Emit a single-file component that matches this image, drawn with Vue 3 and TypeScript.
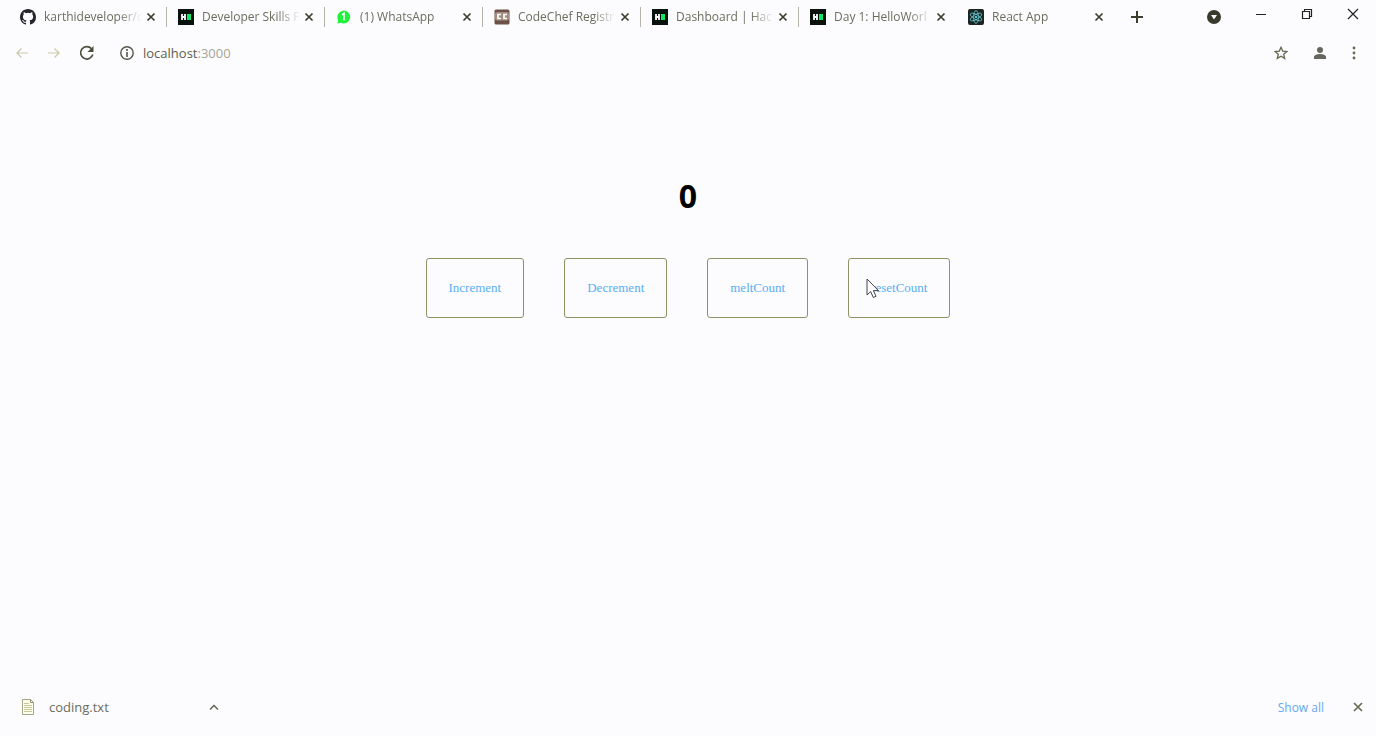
<script setup lang="ts">
import { ref } from 'vue'

type TabIcon = 'github' | 'hacker' | 'whatsapp' | 'chef' | 'react'
interface Tab {
  title: string
  icon: TabIcon
}

const tabs = ref<Tab[]>([
  { title: 'karthideveloper/c', icon: 'github' },
  { title: 'Developer Skills P', icon: 'hacker' },
  { title: '(1) WhatsApp', icon: 'whatsapp' },
  { title: 'CodeChef Registr', icon: 'chef' },
  { title: 'Dashboard | Hac', icon: 'hacker' },
  { title: 'Day 1: HelloWorl', icon: 'hacker' },
  { title: 'React App', icon: 'react' },
])

const count = ref(0)
const actions = [
  { label: 'Increment', run: () => count.value++ },
  { label: 'Decrement', run: () => count.value-- },
  { label: 'meltCount', run: () => (count.value *= 2) },
  { label: 'resetCount', run: () => (count.value = 0) },
]
</script>

<template>
  <div class="browser">
    <header class="tab-strip">
      <nav class="tabs" aria-label="Tabs">
        <div v-for="(tab, i) in tabs" :key="i" class="tab">
          <svg v-if="tab.icon === 'github'" class="favicon" viewBox="0 0 16 16" aria-hidden="true">
            <path fill="#24262b" d="M8 0C3.58 0 0 3.58 0 8c0 3.54 2.29 6.53 5.47 7.59.4.07.55-.17.55-.38v-1.49c-2.01.37-2.53-.49-2.69-.94-.09-.23-.48-.94-.82-1.13-.28-.15-.68-.52-.01-.53.63-.01 1.08.58 1.23.82.72 1.21 1.87.87 2.33.66.07-.52.28-.87.51-1.07-1.78-.2-3.64-.89-3.64-3.95 0-.87.31-1.59.82-2.15-.08-.2-.36-1.02.08-2.12 0 0 .67-.21 2.2.82a7.4 7.4 0 0 1 4 0c1.53-1.04 2.2-.82 2.2-.82.44 1.1.16 1.92.08 2.12.51.56.82 1.27.82 2.15 0 3.07-1.87 3.75-3.65 3.95.29.25.54.73.54 1.48v2.19c0 .21.15.46.55.38A8.01 8.01 0 0 0 16 8c0-4.42-3.58-8-8-8z" />
          </svg>
          <svg v-else-if="tab.icon === 'hacker'" class="favicon" viewBox="0 0 16 16" aria-hidden="true">
            <rect width="16" height="16" fill="#0a120e" />
            <path d="M4 5v6M7 5v6M4 8h3" stroke="#fff" stroke-width="1.800" fill="none" />
            <rect x="9" y="5" width="4" height="6" fill="#12e66a" />
          </svg>
          <svg v-else-if="tab.icon === 'whatsapp'" class="favicon" viewBox="0 0 16 16" aria-hidden="true">
            <path d="M1.500 14.500l.6-3.500A6.400 6.400 0 1 1 4.800 13.700z" fill="#1ff23c" />
            <path d="M6 5.800l2-1.500v7" stroke="#fff" stroke-width="1.600" fill="none" />
          </svg>
          <svg v-else-if="tab.icon === 'chef'" class="favicon" viewBox="0 0 16 16" aria-hidden="true">
            <rect x="0.500" y="0.500" width="15" height="15" rx="1.500" fill="#6b5148" />
            <rect x="1" y="3" width="14" height="8.500" rx="2" fill="#a28d80" />
            <path d="M7 5.500H4v4h3M13 5.500h-3v4h3" stroke="#fff" stroke-width="1.700" fill="none" />
          </svg>
          <svg v-else class="favicon" viewBox="0 0 17 17" aria-hidden="true">
            <rect width="17" height="17" rx="2" fill="#1d2524" />
            <g fill="none" stroke="#5fc3c8" stroke-width="0.900">
              <ellipse cx="8.500" cy="8.500" rx="6.800" ry="2.600" transform="rotate(90 8.500 8.500)" />
              <ellipse cx="8.500" cy="8.500" rx="6.800" ry="2.600" transform="rotate(30 8.500 8.500)" />
              <ellipse cx="8.500" cy="8.500" rx="6.800" ry="2.600" transform="rotate(150 8.500 8.500)" />
            </g>
            <circle cx="8.500" cy="8.500" r="1.300" fill="#5fc3c8" />
          </svg>
          <a class="tab-title" href="#">{{ tab.title }}</a>
          <button class="icon-button" type="button" :aria-label="`Close ${tab.title}`">
            <svg width="10" height="10" viewBox="0 0 10 10"><path d="M1.500 1.500l7 7M8.500 1.500l-7 7" stroke="#3c3d2c" stroke-width="1.700" /></svg>
          </button>
        </div>
      </nav>
      <button class="icon-button new-tab" type="button" aria-label="New tab">
        <svg width="14" height="14" viewBox="0 0 14 14"><path d="M7 1v12M1 7h12" stroke="#3c3d2c" stroke-width="2" /></svg>
      </button>
      <div class="window-controls">
        <button class="icon-button" type="button" aria-label="Search tabs">
          <svg class="search-tabs" width="14" height="14" viewBox="0 0 14 14"><circle cx="7" cy="7" r="7" fill="#393a2c" /><path d="M4 5h6L7 9.500z" fill="#fcfcff" /></svg>
        </button>
        <button class="icon-button" type="button" aria-label="Minimize">
          <svg width="12" height="12" viewBox="0 0 12 12"><path d="M1 6.500h10" stroke="#222" /></svg>
        </button>
        <button class="icon-button" type="button" aria-label="Restore">
          <svg width="12" height="12" viewBox="0 0 12 12"><path d="M1.500 3.500h7v7h-7zM3.500 3.500v-2h7v7h-2" stroke="#222" stroke-width="1.200" fill="none" /></svg>
        </button>
        <button class="icon-button" type="button" aria-label="Close window">
          <svg width="12" height="12" viewBox="0 0 12 12"><path d="M1 1l10 10M11 1L1 11" stroke="#222" stroke-width="1.200" /></svg>
        </button>
      </div>
    </header>

    <div class="toolbar">
      <div class="navigation">
        <button class="icon-button" type="button" aria-label="Back">
          <svg width="14" height="14" viewBox="0 0 14 14"><path d="M13 7H2M6.500 2.500L2 7l4.500 4.500" stroke="#c9c9a8" stroke-width="1.200" fill="none" /></svg>
        </button>
        <button class="icon-button" type="button" aria-label="Forward">
          <svg width="14" height="14" viewBox="0 0 14 14"><path d="M1 7h11M7.500 2.500L12 7l-4.500 4.500" stroke="#c9c9a8" stroke-width="1.200" fill="none" /></svg>
        </button>
        <button class="icon-button" type="button" aria-label="Reload">
          <svg width="16" height="16" viewBox="0 0 16 16"><path d="M13.800 9.500A6.200 6.200 0 1 1 12.500 3.700" stroke="#4d4e3e" stroke-width="1.700" fill="none" /><path d="M14.500 1v6h-6z" fill="#4d4e3e" /></svg>
        </button>
      </div>
      <div class="address">
        <svg width="14" height="14" viewBox="0 0 14 14" aria-hidden="true"><circle cx="7" cy="7" r="6.200" fill="none" stroke="#55564a" stroke-width="1.400" /><path d="M7 6v5M7 3v2" stroke="#55564a" stroke-width="1.600" /></svg>
        <a class="url" href="#">localhost<span class="port">:3000</span></a>
      </div>
      <div class="toolbar-actions">
        <button class="icon-button" type="button" aria-label="Bookmark this page">
          <svg width="14" height="14" viewBox="0 0 14 14"><path d="M7 1.300l1.700 3.800 4.200.4-3.200 2.700 1 4.200L7 10.200l-3.700 2.200 1-4.200L1.100 5.500l4.200-.4z" fill="none" stroke="#66674f" stroke-width="1.300" /></svg>
        </button>
        <button class="icon-button" type="button" aria-label="Profile">
          <svg width="14" height="14" viewBox="0 0 14 14"><circle cx="7" cy="4" r="3" fill="#66675e" /><path d="M1 13v-2c0-2 3-3 6-3s6 1 6 3v2z" fill="#66675e" /></svg>
        </button>
        <button class="icon-button" type="button" aria-label="Menu">
          <svg width="4" height="14" viewBox="0 0 4 14"><g fill="#66674f"><circle cx="2" cy="2" r="1.400" /><circle cx="2" cy="7" r="1.400" /><circle cx="2" cy="12" r="1.400" /></g></svg>
        </button>
      </div>
    </div>

    <main class="page">
      <h1 class="count">{{ count }}</h1>
      <div class="counter-actions">
        <div v-for="(action, i) in actions" :key="action.label" class="action-slot">
          <button class="counter-button" type="button" @click="action.run">{{ action.label }}</button>
          <svg v-if="i === actions.length - 1" class="pointer" width="14" height="21" viewBox="0 0 14 21" aria-hidden="true">
            <path d="M1 1v16l3.600-3.500L7.300 19.500l2.700-1.200-2.600-5.700H12.500z" fill="#fcfcff" stroke="#44454a" />
          </svg>
        </div>
      </div>
    </main>

    <footer class="downloads">
      <a class="download" href="#">
        <svg width="14" height="18" viewBox="0 0 14 18" aria-hidden="true">
          <path d="M1.500 1.500h8l3 3v12h-11z" fill="#fdfdeb" stroke="#a3a38a" />
          <path d="M9.500 1.500v3h3" fill="none" stroke="#8d8d76" />
          <path d="M3 5.500h5M3 7.500h8M3 9.500h8M3 11.500h8M3 13.500h8" stroke="#c6c69c" />
        </svg>
        <span>coding.txt</span>
      </a>
      <button class="icon-button" type="button" aria-label="Download options">
        <svg width="10" height="8" viewBox="0 0 10 8"><path d="M1 6.500l4-4 4 4" stroke="#5f604b" stroke-width="1.400" fill="none" /></svg>
      </button>
      <div class="downloads-end">
        <a class="show-all" href="#">Show all</a>
        <button class="icon-button" type="button" aria-label="Close downloads">
          <svg width="10" height="10" viewBox="0 0 10 10"><path d="M1 1l8 8M9 1L1 9" stroke="#68694e" stroke-width="1.700" /></svg>
        </button>
      </div>
    </footer>
  </div>
</template>

<style>
body {
  margin: 0;
  background: #fcfcff;
}
</style>

<style scoped>
.browser {
  display: flex;
  flex-direction: column;
  min-height: 100vh;
  background: #fcfcff;
  color: #6c6d5c;
  font-family: 'Open Sans', 'Noto Sans', sans-serif;
  font-size: 12px;
}

a {
  color: inherit;
  text-decoration: none;
}

svg {
  display: block;
  flex: none;
}

.icon-button {
  display: flex;
  flex: none;
  padding: 0;
  border: 0;
  background: none;
}

.tab-strip {
  display: flex;
  align-items: center;
  height: 34px;
  padding: 0 17px 0 8px;
}

.tabs {
  display: flex;
  flex: 0 1 1106px;
  min-width: 0;
}

.tab {
  display: flex;
  flex: 1 1 0;
  align-items: center;
  box-sizing: border-box;
  min-width: 0;
  height: 20px;
  padding: 0 10px 0 11px;
  border-left: 1px solid #b4b5a8;
}

.tab:first-child,
.tab:last-child {
  border-color: transparent;
}

.favicon {
  width: 16px;
  height: 16px;
}

.tab-title {
  flex: 1;
  min-width: 0;
  margin: 0 2px 0 8px;
  overflow: hidden;
  line-height: 20px;
  white-space: nowrap;
  mask-image: linear-gradient(to right, #000 75%, transparent 98%);
}

.new-tab {
  margin-left: 16px;
}

.window-controls {
  display: flex;
  align-items: center;
  gap: 34px;
  height: 28px;
  margin-left: auto;
  align-self: flex-start;
}

.search-tabs {
  margin-top: 6px;
}

.toolbar {
  display: flex;
  align-items: center;
  height: 38px;
  padding: 0 20px 0 15px;
}

.navigation {
  display: flex;
  align-items: center;
  gap: 18px;
}

.address {
  display: flex;
  flex: 1;
  align-items: center;
  gap: 9px;
  margin-left: 25px;
}

.url {
  color: #5c5d4c;
  font-size: 13px;
}

.port {
  color: #a4a58f;
}

.toolbar-actions {
  display: flex;
  align-items: center;
  gap: 25px;
}

.page {
  display: flex;
  flex: 1;
  flex-direction: column;
  align-items: center;
  padding-top: 102px;
}

.count {
  margin: 0 0 40px;
  color: #000;
  font-size: 32px;
  line-height: 44px;
}

.counter-actions {
  display: flex;
  gap: 40px;
}

.action-slot {
  position: relative;
}

.counter-button {
  display: block;
  padding: 21px 22px;
  border: 1px solid #8f9068;
  border-radius: 3px;
  background: transparent;
  color: #58aef4;
  font-family: 'Liberation Serif', serif;
  font-size: 13px;
  line-height: 16px;
}

.pointer {
  position: absolute;
  top: 20px;
  left: 18px;
}

.downloads {
  display: flex;
  align-items: center;
  height: 58px;
  padding: 0 13px 0 21px;
}

.download {
  display: flex;
  align-items: center;
  gap: 14px;
  width: 188px;
  font-size: 13px;
}

.downloads-end {
  display: flex;
  align-items: center;
  gap: 29px;
  margin-left: auto;
}

.show-all {
  color: #64a9ee;
}
</style>
